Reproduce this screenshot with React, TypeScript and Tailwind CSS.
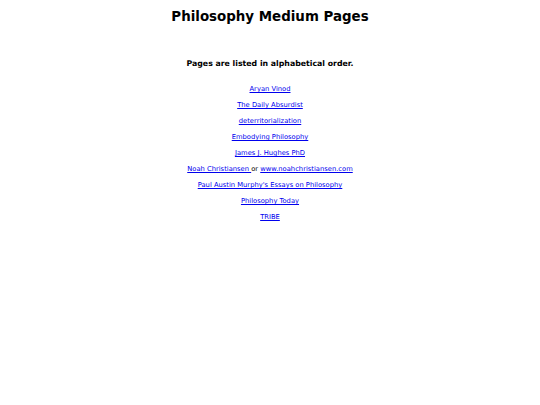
const links: { label: string; extra?: string }[] = [
  { label: "Aryan Vinod" },
  { label: "The Daily Absurdist" },
  { label: "deterritorialization" },
  { label: "Embodying Philosophy" },
  { label: "James J. Hughes PhD" },
  { label: "Noah Christiansen ", extra: "www.noahchristiansen.com" },
  { label: "Paul Austin Murphy's Essays on Philosophy" },
  { label: "Philosophy Today" },
  { label: "TRIBE" },
];

export default function App() {
  return (
    <div className="min-h-[405px] bg-white text-black text-center font-['DejaVu_Sans',Verdana,sans-serif]">
      <h1 className="pt-[9px] text-[13.4px] font-bold leading-[16px]">Philosophy Medium Pages</h1>
      <p className="mt-[34px] text-[7.8px] font-bold leading-[10px]">Pages are listed in alphabetical order.</p>
      <ul className="mt-[15px] flex flex-col gap-[5px] text-[6.75px] leading-[11px]">
        {links.map((l) => (
          <li key={l.label}>
            <a href="#" className="text-[#0000ee] underline">{l.label}</a>
            {l.extra && (
              <>
                {" "}or <a href="#" className="text-[#0000ee] underline">{l.extra}</a>
              </>
            )}
          </li>
        ))}
      </ul>
    </div>
  );
}
